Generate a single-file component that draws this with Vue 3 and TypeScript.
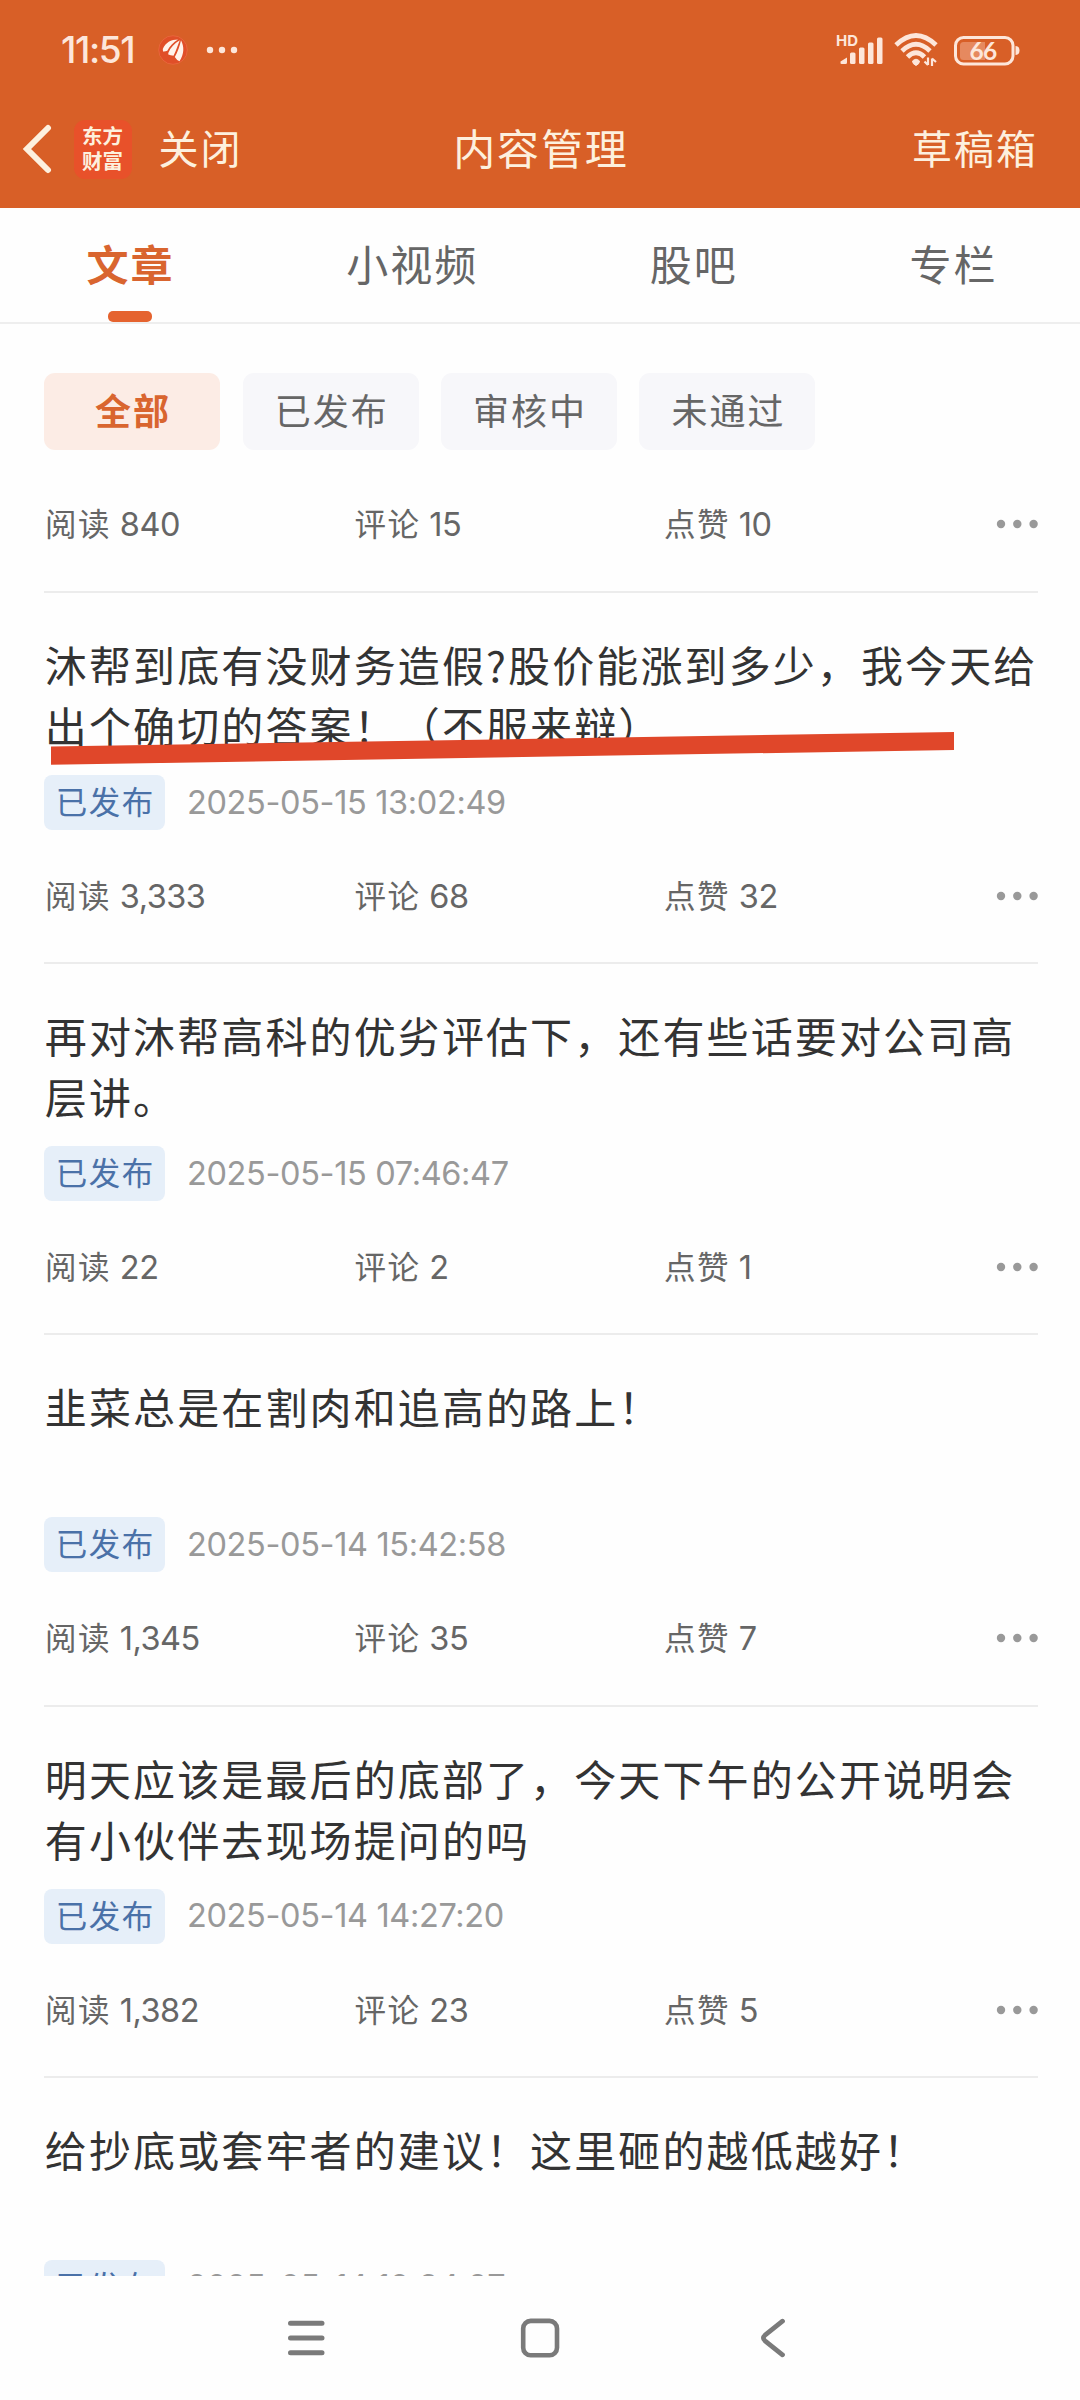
<script setup lang="ts">
interface Article {
  title: string
  time: string
  reads: string
  comments: string
  likes: string
  marked?: boolean
}

const tabs: string[] = ['文章', '小视频', '股吧', '专栏']
const filters: string[] = ['全部', '已发布', '审核中', '未通过']

const articles: Article[] = [
  { title: '', time: '', reads: '840', comments: '15', likes: '10' },
  { title: '沐帮到底有没财务造假?股价能涨到多少，我今天给出个确切的答案！（不服来辩）', time: '2025-05-15 13:02:49', reads: '3,333', comments: '68', likes: '32', marked: true },
  { title: '再对沐帮高科的优劣评估下，还有些话要对公司高层讲。', time: '2025-05-15 07:46:47', reads: '22', comments: '2', likes: '1' },
  { title: '韭菜总是在割肉和追高的路上！', time: '2025-05-14 15:42:58', reads: '1,345', comments: '35', likes: '7' },
  { title: '明天应该是最后的底部了，今天下午的公开说明会有小伙伴去现场提问的吗', time: '2025-05-14 14:27:20', reads: '1,382', comments: '23', likes: '5' },
  { title: '给抄底或套牢者的建议！这里砸的越低越好！', time: '2025-05-14 10:34:27', reads: '', comments: '', likes: '' },
]
</script>

<template>
  <div class="screen">
    <header class="top">
      <div class="status">
        <span class="clock">11:51</span>
        <svg class="app-dot" width="30" height="30" viewBox="0 0 30 30">
          <circle cx="15" cy="15" r="14.3" fill="#e04f28" stroke="#ea6a40" stroke-width=".8" />
          <g fill="#fff3ea">
            <path d="M4.800 14C7.500 7.500 13 4.500 20 4.500C15.500 7.500 11.500 11 9.300 15.800Q7 16.800 5 16.500Z" />
            <path d="M10.300 18C12.500 12.500 16.500 8 21.800 5.200C19.800 10 18.300 15.500 15.500 20.800Q12.500 20.500 10.300 19.500Z" />
            <path d="M23 5.200C26.300 12 26.300 18.500 21.500 26.200Q18.500 25 16.800 22C19.800 16.500 21.800 11 23 5.200Z" />
          </g>
        </svg>
        <svg class="more-dots" width="32" height="8" viewBox="0 0 32 8" fill="#fde6da">
          <circle cx="4" cy="4" r="3.200" /><circle cx="16" cy="4" r="3.200" /><circle cx="28" cy="4" r="3.200" />
        </svg>
        <div class="status-right">
          <svg width="50" height="34" viewBox="0 0 50 34" fill="#fde6da">
            <text class="hd" x="0" y="13" textLength="22">HD</text>
            <path d="M5.500 31Q4 31 4.500 28.500L11 24.500V29.500Q11 31 9.500 31Z" />
            <rect x="14" y="19.500" width="5.500" height="11.500" rx="1.500" />
            <rect x="23" y="14.500" width="5.500" height="16.500" rx="1.500" />
            <rect x="32" y="9.500" width="5.500" height="21.500" rx="1.500" />
            <rect x="41" y="4.500" width="5.500" height="26.500" rx="1.500" />
          </svg>
          <svg class="wifi" width="46" height="36" viewBox="0 0 46 36" fill="none" stroke="#fde6da" stroke-width="4.800">
            <path d="M2 13Q22 -6 42 13" />
            <path d="M8 19Q22 5.500 36 19" />
            <path d="M13.500 25Q22 16.500 30.500 25" />
            <path d="M18.500 29Q22 25.500 25.500 29Q25.500 32 22 33.500Q18.500 32 18.500 29Z" fill="#fde6da" stroke-width="1" />
            <path d="M34 25.500V33M30.500 29.500L34 33M38 34V26.500M38 26.500L42 30" stroke-width="2.200" />
          </svg>
          <svg width="68" height="32" viewBox="0 0 68 32">
            <rect x="2.500" y="3.500" width="57.500" height="26.500" rx="8" fill="none" stroke="#fde6da" stroke-width="3" />
            <path d="M10.500 8H32V26H10.500Q7 26 7 22.500V11.500Q7 8 10.500 8Z" fill="#e6895f" />
            <path d="M62.500 12Q66.500 12 66.500 16.500T62.500 21Z" fill="#fde6da" />
            <text class="level" x="16.500" y="25.500">66</text>
          </svg>
        </div>
      </div>
      <div class="bar">
        <div class="bar-left">
          <svg width="32" height="52" viewBox="0 0 32 52" fill="none" stroke="#fdf0de" stroke-width="6" stroke-linecap="round" stroke-linejoin="miter">
            <path d="M28 5L7 26L28 47" />
          </svg>
          <div class="brand"><span>东方</span><span>财富</span></div>
          <span class="close">关闭</span>
        </div>
        <h1>内容管理</h1>
        <span class="drafts">草稿箱</span>
      </div>
    </header>

    <nav class="tabs">
      <span v-for="(t, i) in tabs" :key="t" class="tab" :class="{ active: i === 0 }">{{ t }}</span>
    </nav>

    <div class="filters">
      <span v-for="(f, i) in filters" :key="f" class="chip" :class="{ active: i === 0 }">{{ f }}</span>
    </div>

    <main class="list">
      <article v-for="(a, i) in articles" :key="i" class="item" :class="{ partial: !a.title }">
        <template v-if="a.title">
          <h2>{{ a.title }}</h2>
          <svg v-if="a.marked" class="mark" width="904" height="34" viewBox="0 0 904 34">
            <polygon points="0,14.500 903,0 903,18 0,32.800" fill="#e0472a" />
          </svg>
          <div class="meta">
            <span class="badge">已发布</span>
            <time>{{ a.time }}</time>
          </div>
        </template>
        <div v-if="a.reads" class="stats">
          <span class="stat">阅读<b>{{ a.reads }}</b></span>
          <span class="stat">评论<b>{{ a.comments }}</b></span>
          <span class="stat">点赞<b>{{ a.likes }}</b></span>
          <svg class="menu" width="42" height="10" viewBox="0 0 42 10" fill="#999">
            <circle cx="5" cy="5" r="4.200" /><circle cx="21.300" cy="5" r="4.200" /><circle cx="37.600" cy="5" r="4.200" />
          </svg>
        </div>
      </article>
    </main>

    <footer class="sysnav">
      <svg width="42" height="42" viewBox="0 0 42 42" fill="none" stroke="#7a7a7a" stroke-width="5" stroke-linecap="round">
        <path d="M5.500 6.300H37M5.500 21H37M5.500 35.700H37" />
      </svg>
      <svg width="42" height="42" viewBox="0 0 42 42" fill="none" stroke="#7a7a7a" stroke-width="4.600">
        <rect x="4.200" y="3.900" width="33.800" height="34.400" rx="7.500" />
      </svg>
      <svg width="42" height="42" viewBox="0 0 42 42" fill="none" stroke="#7a7a7a" stroke-width="4.800" stroke-linecap="round" stroke-linejoin="round">
        <path d="M29.500 4.200L12 18.200Q8.800 21 12 23.800L29.500 37.800" />
      </svg>
    </footer>
  </div>
</template>

<style>
body {
  margin: 0;
  background: #fefefe;
}
</style>

<style scoped>
.screen {
  width: 1080px;
  height: 2400px;
  display: flex;
  flex-direction: column;
  overflow: hidden;
  background: #fefefe;
  font-family: "Noto Sans CJK SC", sans-serif;
  text-spacing-trim: space-all;
  white-space: nowrap;
}
.top {
  height: 207.500px;
  flex: none;
  background: #d85f27;
  color: #fdf0de;
}
.status {
  height: 100px;
  display: flex;
  align-items: center;
  padding: 0 59px 0 61px;
}
.clock {
  width: 97px;
  font: 500 37px/50px Inter, sans-serif;
  letter-spacing: -1.400px;
  color: #fde6da;
}
.more-dots {
  margin-left: 18px;
}
.status-right {
  display: flex;
  align-items: center;
  margin-left: auto;
}
.wifi {
  margin: 0 13px 0 8px;
}
.hd {
  font: 700 15px Inter, sans-serif;
}
.level {
  font: 700 24.500px Lato, sans-serif;
  letter-spacing: -0.800px;
  fill: #fde6da;
}
.bar {
  height: 94px;
  display: grid;
  grid-template-columns: 1fr auto 1fr;
  align-items: center;
  padding: 0 42px 4px;
}
.bar-left {
  display: flex;
  align-items: center;
  margin-left: -22px;
}
.bar-left > svg,
.brand {
  position: relative;
  top: 2px;
}
.brand {
  width: 58px;
  height: 59px;
  margin-left: 21.500px;
  border-radius: 11px;
  background: #e8512a;
  display: flex;
  flex-direction: column;
  align-items: center;
  justify-content: center;
  padding-bottom: 2px;
  box-sizing: border-box;
  font-size: 20.500px;
  font-weight: 700;
  line-height: 25px;
}
.close,
.drafts {
  font-size: 40px;
  line-height: 58px;
  letter-spacing: 2px;
}
.close {
  margin-left: 27px;
}
.drafts {
  justify-self: end;
}
h1 {
  margin: 0 -1.800px 0 0;
  font-size: 42px;
  font-weight: 400;
  line-height: 58px;
  letter-spacing: 1.800px;
}
.tabs {
  height: 114.500px;
  flex: none;
  display: flex;
  justify-content: space-between;
  padding: 0 82.500px 0 86.500px;
  border-bottom: 2px solid #eee;
}
.tab {
  position: relative;
  font-size: 42px;
  line-height: 109px;
  letter-spacing: 2px;
  color: #666;
}
.tab.active {
  font-weight: 700;
  color: #d9652f;
}
.tab.active::after {
  content: "";
  position: absolute;
  left: 21.500px;
  bottom: 0;
  width: 44px;
  height: 11px;
  border-radius: 5px;
  background: #e5632f;
}
.filters {
  flex: none;
  display: flex;
  gap: 22.300px;
  padding: 49px 44px 0;
}
.chip {
  width: 176px;
  height: 77px;
  border-radius: 11px;
  background: #f7f7fa;
  color: #666;
  font-size: 36px;
  line-height: 73px;
  letter-spacing: 2px;
  text-indent: 2px;
  text-align: center;
}
.chip + .chip {
  position: relative;
  left: 0.500px;
}
.chip.active {
  background: #fcece5;
  color: #d9652f;
  font-weight: 700;
}
.list {
  height: 1826px;
  flex: none;
  overflow: hidden;
  padding: 0 42px 0 44px;
}
.item {
  position: relative;
  box-sizing: border-box;
  height: 371.200px;
  padding-top: 40px;
  border-bottom: 2px solid #ececec;
}
.item.partial {
  height: 143px;
  padding-top: 49px;
}
h2 {
  height: 142px;
  margin: 0;
  padding-left: 0.800px;
  color: #333;
  font-size: 42px;
  font-weight: 400;
  line-height: 61px;
  letter-spacing: 2.120px;
  white-space: normal;
  word-break: break-all;
}
.mark {
  position: absolute;
  left: 7px;
  top: 139px;
}
.meta {
  height: 55px;
  display: flex;
  align-items: center;
}
.badge {
  width: 121px;
  height: 55px;
  border-radius: 8px;
  background: #e6eff9;
  color: #4a71a8;
  font-size: 31.500px;
  line-height: 50px;
  letter-spacing: 1.400px;
  text-indent: 1.400px;
  text-align: center;
}
time {
  margin-left: 22px;
  color: #999;
  font: 400 32.500px/50px Inter, sans-serif;
  letter-spacing: -0.360px;
}
.stats {
  height: 50px;
  margin-top: 41px;
  display: flex;
  align-items: center;
  color: #666;
  font-size: 31.500px;
  line-height: 47px;
}
.partial .stats {
  margin-top: 0;
}
.stat {
  width: 308.500px;
  height: 50px;
  padding-left: 1px;
  display: flex;
  letter-spacing: 1.400px;
}
.stat b {
  margin-left: 9px;
  font: 400 32.500px/51px Inter, sans-serif;
  letter-spacing: -0.500px;
}
.menu {
  margin-left: auto;
}
.sysnav {
  flex: 1;
  display: flex;
  justify-content: center;
  align-items: center;
  gap: 192px;
}
</style>
